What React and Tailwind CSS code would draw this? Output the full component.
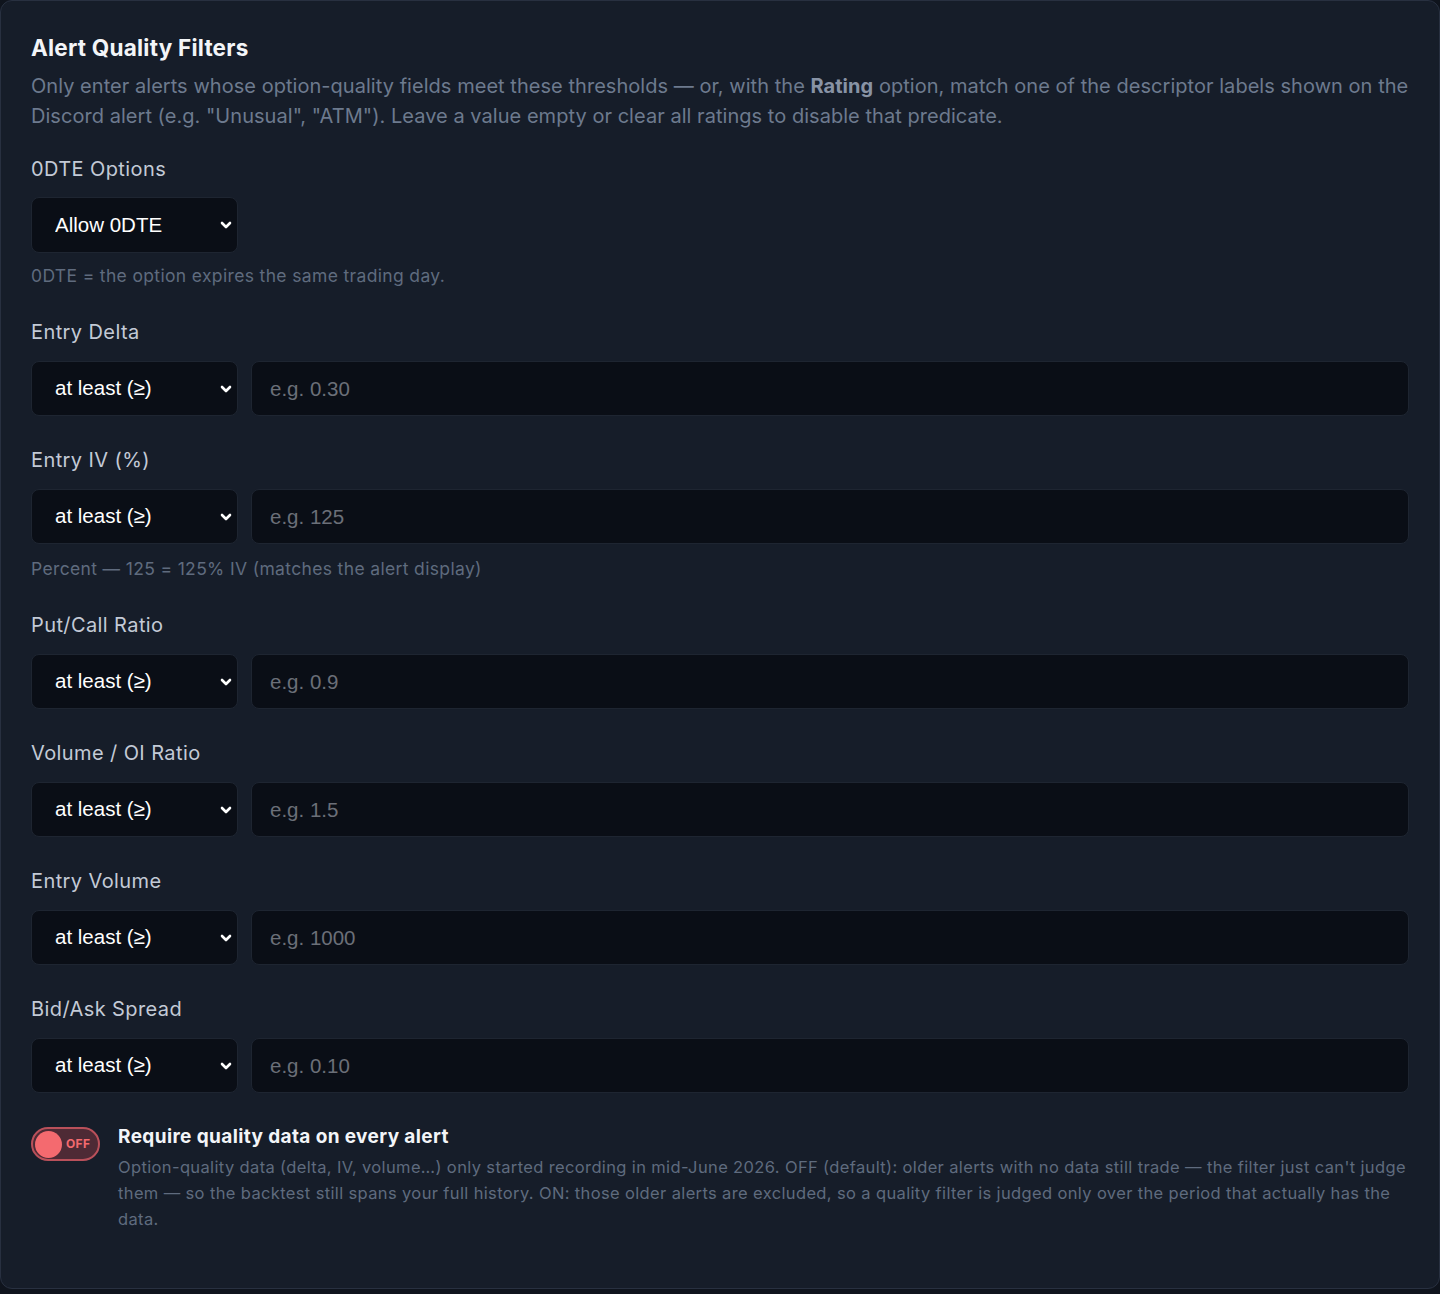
import React, { useState } from "react";

const fields = [
  { label: "Entry Delta", placeholder: "e.g. 0.30" },
  { label: "Entry IV (%)", placeholder: "e.g. 125", help: "Percent — 125 = 125% IV (matches the alert display)" },
  { label: "Put/Call Ratio", placeholder: "e.g. 0.9" },
  { label: "Volume / OI Ratio", placeholder: "e.g. 1.5" },
  { label: "Entry Volume", placeholder: "e.g. 1000" },
  { label: "Bid/Ask Spread", placeholder: "e.g. 0.10" },
];

function Chevron() {
  return (
    <svg className="pointer-events-none absolute right-[5px] top-1/2 h-[14px] w-[14px] -translate-y-1/2 text-white" viewBox="0 0 14 14" fill="none">
      <path d="M3 5l4 4 4-4" stroke="currentColor" strokeWidth="2.6" strokeLinecap="round" strokeLinejoin="round" />
    </svg>
  );
}

function Select({ value, options, tall }) {
  return (
    <div className="relative w-[207px] shrink-0">
      <select
        defaultValue={value}
        className={
          (tall ? "h-[56px] " : "h-[55px] ") +
          "w-full appearance-none rounded-lg border border-[#1e2531] bg-[#0a0e16] pl-[23px] pr-8 text-[20.5px] text-white outline-none"
        }
        style={{ fontFamily: "'Liberation Sans', Arial, sans-serif" }}
      >
        {options.map((o) => (
          <option key={o}>{o}</option>
        ))}
      </select>
      <Chevron />
    </div>
  );
}

export default function App() {
  const [requireData, setRequireData] = useState(false);

  return (
    <div className="min-h-[1294px] bg-[#0f141d]" style={{ fontFamily: "Inter, 'Noto Sans', sans-serif" }}>
      <div className="rounded-xl border border-[#283040] bg-[#161d29] px-[30px] pb-[56px] pt-[32px]">
        <h2 className="text-[22.5px] font-bold leading-[29px] tracking-[0.01em] text-[#f3f5f8]">Alert Quality Filters</h2>
        <p className="mt-[9px] text-[20px] leading-[30px] tracking-[0.002em] text-[#6d7a8e]">
          Only enter alerts whose option-quality fields meet these thresholds — or, with the{" "}
          <span className="font-bold text-[#8893a5]">Rating</span> option, match one of the descriptor labels shown on the Discord
          alert (e.g. "Unusual", "ATM"). Leave a value empty or clear all ratings to disable that predicate.
        </p>

        <div className="mt-[24px] space-y-[30px]">
          <div>
            <div className="mb-[14px] text-[20px] leading-[28px] tracking-[0.02em] text-[#c3cad6]">0DTE Options</div>
            <Select tall value="Allow 0DTE" options={["Allow 0DTE", "Exclude 0DTE", "Only 0DTE"]} />
            <div className="mt-[11px] text-[17.5px] leading-[24px] tracking-[0.02em] text-[#5f6b7e]">
              0DTE = the option expires the same trading day.
            </div>
          </div>

          {fields.map((f) => (
            <div key={f.label}>
              <div className="mb-[15px] text-[20px] leading-[28px] tracking-[0.02em] text-[#c3cad6]">{f.label}</div>
              <div className="flex gap-[13px]">
                <Select value="at least (≥)" options={["at least (≥)", "at most (≤)"]} />
                <input
                  type="text"
                  placeholder={f.placeholder}
                  className="h-[55px] flex-1 rounded-lg border border-[#1e2531] bg-[#0a0e16] px-[18px] text-[20.5px] text-white outline-none placeholder:text-[#6b6f78]"
                  style={{ fontFamily: "'Liberation Sans', Arial, sans-serif" }}
                />
              </div>
              {f.help && (
                <div className="mt-[13px] text-[17.5px] leading-[24px] tracking-[0.02em] text-[#5f6b7e]">{f.help}</div>
              )}
            </div>
          ))}
        </div>

        <div className="mt-[32px] flex items-start gap-[18px]">
          <button
            onClick={() => setRequireData(!requireData)}
            className="relative mt-[2px] flex h-[34px] w-[69px] shrink-0 items-center rounded-full border-2 border-[#b9505a] bg-[#4e2a35]"
          >
            <span className="ml-[2px] h-[27px] w-[27px] rounded-full bg-[#f46a6f]" />
            <span className="ml-[4px] text-[12px] font-bold tracking-wide text-[#f46a6f]">OFF</span>
          </button>
          <div>
            <div className="text-[19px] font-bold leading-[24px] tracking-[0.02em] text-[#f3f5f8]">
              Require quality data on every alert
            </div>
            <p className="mt-[5px] text-[16.5px] leading-[26px] tracking-[0.022em] text-[#5f6b7e]">
              Option-quality data (delta, IV, volume…) only started recording in mid-June 2026. OFF (default): older alerts with no data
              still trade — the filter just can't judge them — so the backtest still spans your full history. ON: those older alerts are
              excluded, so a quality filter is judged only over the period that actually has the data.
            </p>
          </div>
        </div>
      </div>
    </div>
  );
}
